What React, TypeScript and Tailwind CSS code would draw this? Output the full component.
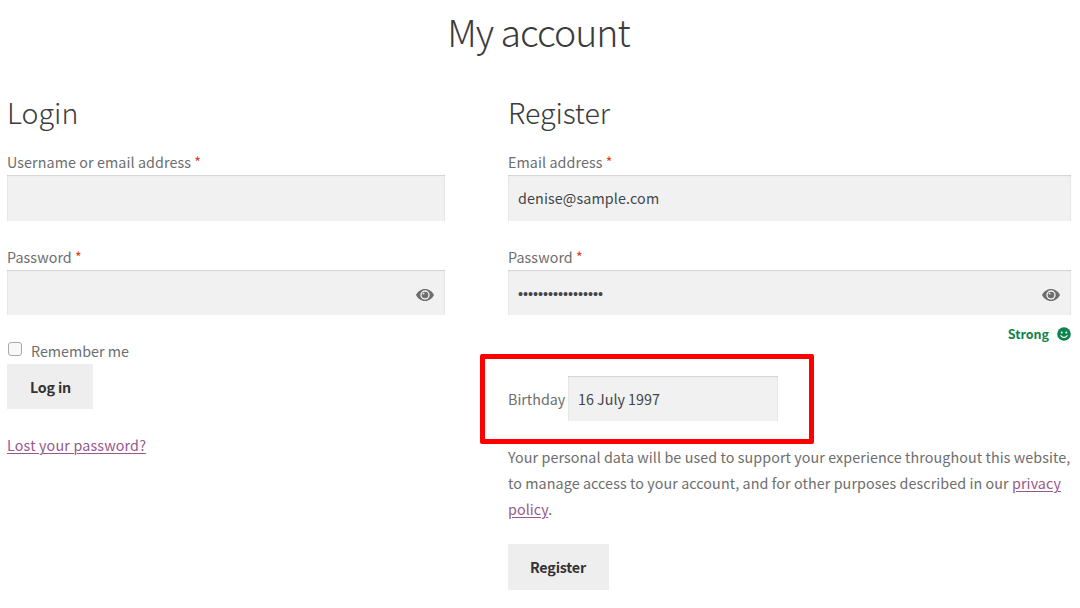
import React from "react";

const field =
  "block w-full bg-[#f1f1f1] text-[#43454b] px-[10px] outline-none shadow-[inset_0_1px_1px_rgba(0,0,0,0.125),inset_1px_0_0_rgba(0,0,0,0.03),inset_-1px_0_0_rgba(0,0,0,0.03)]";
const link = "text-[#96588a] underline decoration-1 underline-offset-[2px]";

function Label({ children }: { children: React.ReactNode }) {
  return (
    <label className="block h-[26px] leading-[26px]">
      {children} <span className="text-[#e2401c]">*</span>
    </label>
  );
}

function Smile() {
  return (
    <svg viewBox="0 0 14 14" className="mb-px h-[14px] w-[14px]" fill="none">
      <circle cx="7" cy="7" r="6.8" fill="#0f834d" />
      <circle cx="4.7" cy="5.4" r="1" fill="#fff" />
      <circle cx="9.3" cy="5.4" r="1" fill="#fff" />
      <path d="M3.8 8.6C4.6 9.8 5.7 10.4 7 10.4s2.4-.6 3.2-1.8" stroke="#fff" strokeWidth="1.1" strokeLinecap="round" />
    </svg>
  );
}

function Eye() {
  return (
    <svg viewBox="0 0 18 12" className="absolute right-[11px] top-[19px] h-[12px] w-[18px]">
      <path d="M0 6C1.8 2.4 5.1 0 9 0s7.2 2.4 9 6c-1.8 3.6-5.1 6-9 6S1.8 9.6 0 6Z" fill="#6d6d6d" />
      <circle cx="9" cy="6" r="4.7" fill="#f1f1f1" />
      <circle cx="9" cy="6" r="3.3" fill="#6d6d6d" />
      <circle cx="7.6" cy="4.6" r="0.95" fill="#f1f1f1" />
    </svg>
  );
}

function PasswordField({ value }: { value: string }) {
  return (
    <div className="relative">
      <input
        type="password"
        defaultValue={value}
        className={`${field} h-[45px] pt-[2px] font-['Liberation_Sans',sans-serif] text-[14.3px] tracking-normal`}
      />
      <Eye />
    </div>
  );
}

export default function App() {
  return (
    <main className="h-[608px] w-[1080px] overflow-hidden bg-white px-[7px] font-['Noto_Sans_CJK_SC',sans-serif] text-[14.3px] tracking-[0.085px] text-[#6d6d6d]">
      <h1 className="h-[91px] pr-[3px] pt-[5px] text-center text-[37.5px] font-light leading-[52px] tracking-[-1px] text-[#3c3c3c]">
        My account
      </h1>
      <div className="flex gap-[63px]">
        <section className="w-[438px]">
          <h2 className="h-[58px] text-[28.6px] font-light leading-[42px] tracking-normal text-[#3c3c3c]">Login</h2>
          <Label>Username or email address</Label>
          <input type="text" className={`${field} h-[46px]`} />
          <div className="h-[23px]" />
          <Label>Password</Label>
          <PasswordField value="" />
          <div className="mt-[23px] flex h-[26px] leading-[26px]">
            <input
              type="checkbox"
              className="ml-px mr-[9px] mt-[4px] h-[14px] w-[14px] appearance-none rounded-[3px] border border-[#a8a8a8] bg-[#f8f8f8]"
            />
            <span className="tracking-normal">Remember me</span>
          </div>
          <button className="block h-[45px] w-[86px] bg-[#eeeeee] pl-px font-semibold tracking-[-0.2px] text-[#333]">Log in</button>
          <p className="mt-[23px] leading-[26px] tracking-[0.17px]">
            <a className={link}>Lost your password?</a>
          </p>
        </section>
        <section className="w-[563px]">
          <h2 className="h-[58px] text-[28.6px] font-light leading-[42px] tracking-[-0.1px] text-[#3c3c3c]">Register</h2>
          <Label>Email address</Label>
          <input type="text" defaultValue="denise@sample.com" className={`${field} h-[46px] pb-[2px] tracking-[0.13px]`} />
          <div className="h-[23px]" />
          <Label>Password</Label>
          <PasswordField value="abcdefghijklmnopq" />
          <div className="flex h-[39px] items-center justify-end gap-[8px] text-[12.5px] font-semibold tracking-normal text-[#0f834d]">
            Strong <Smile />
          </div>
          <div className="-ml-[28px] flex h-[90px] w-[334px] rounded-[2px] border-[5px] border-[#ff0000] pl-[23px] pt-[17px]">
            <span className="w-[60px] whitespace-nowrap leading-[45px] tracking-normal">Birthday</span>
            <input type="text" defaultValue="16 July 1997" className={`${field} h-[45px] !w-[210px] tracking-normal`} />
          </div>
          <p className="w-[570px] leading-[26px]">
            Your personal data will be used to support your experience throughout this website,
            <br />
            to manage access to your account, and for other purposes described in our <a className={link}>privacy</a>
            <br />
            <a className={link}>policy</a>.
          </p>
          <button className="mt-[22px] block h-[46px] w-[101px] bg-[#eeeeee] pr-px font-semibold tracking-[-0.2px] text-[#333]">
            Register
          </button>
        </section>
      </div>
    </main>
  );
}
